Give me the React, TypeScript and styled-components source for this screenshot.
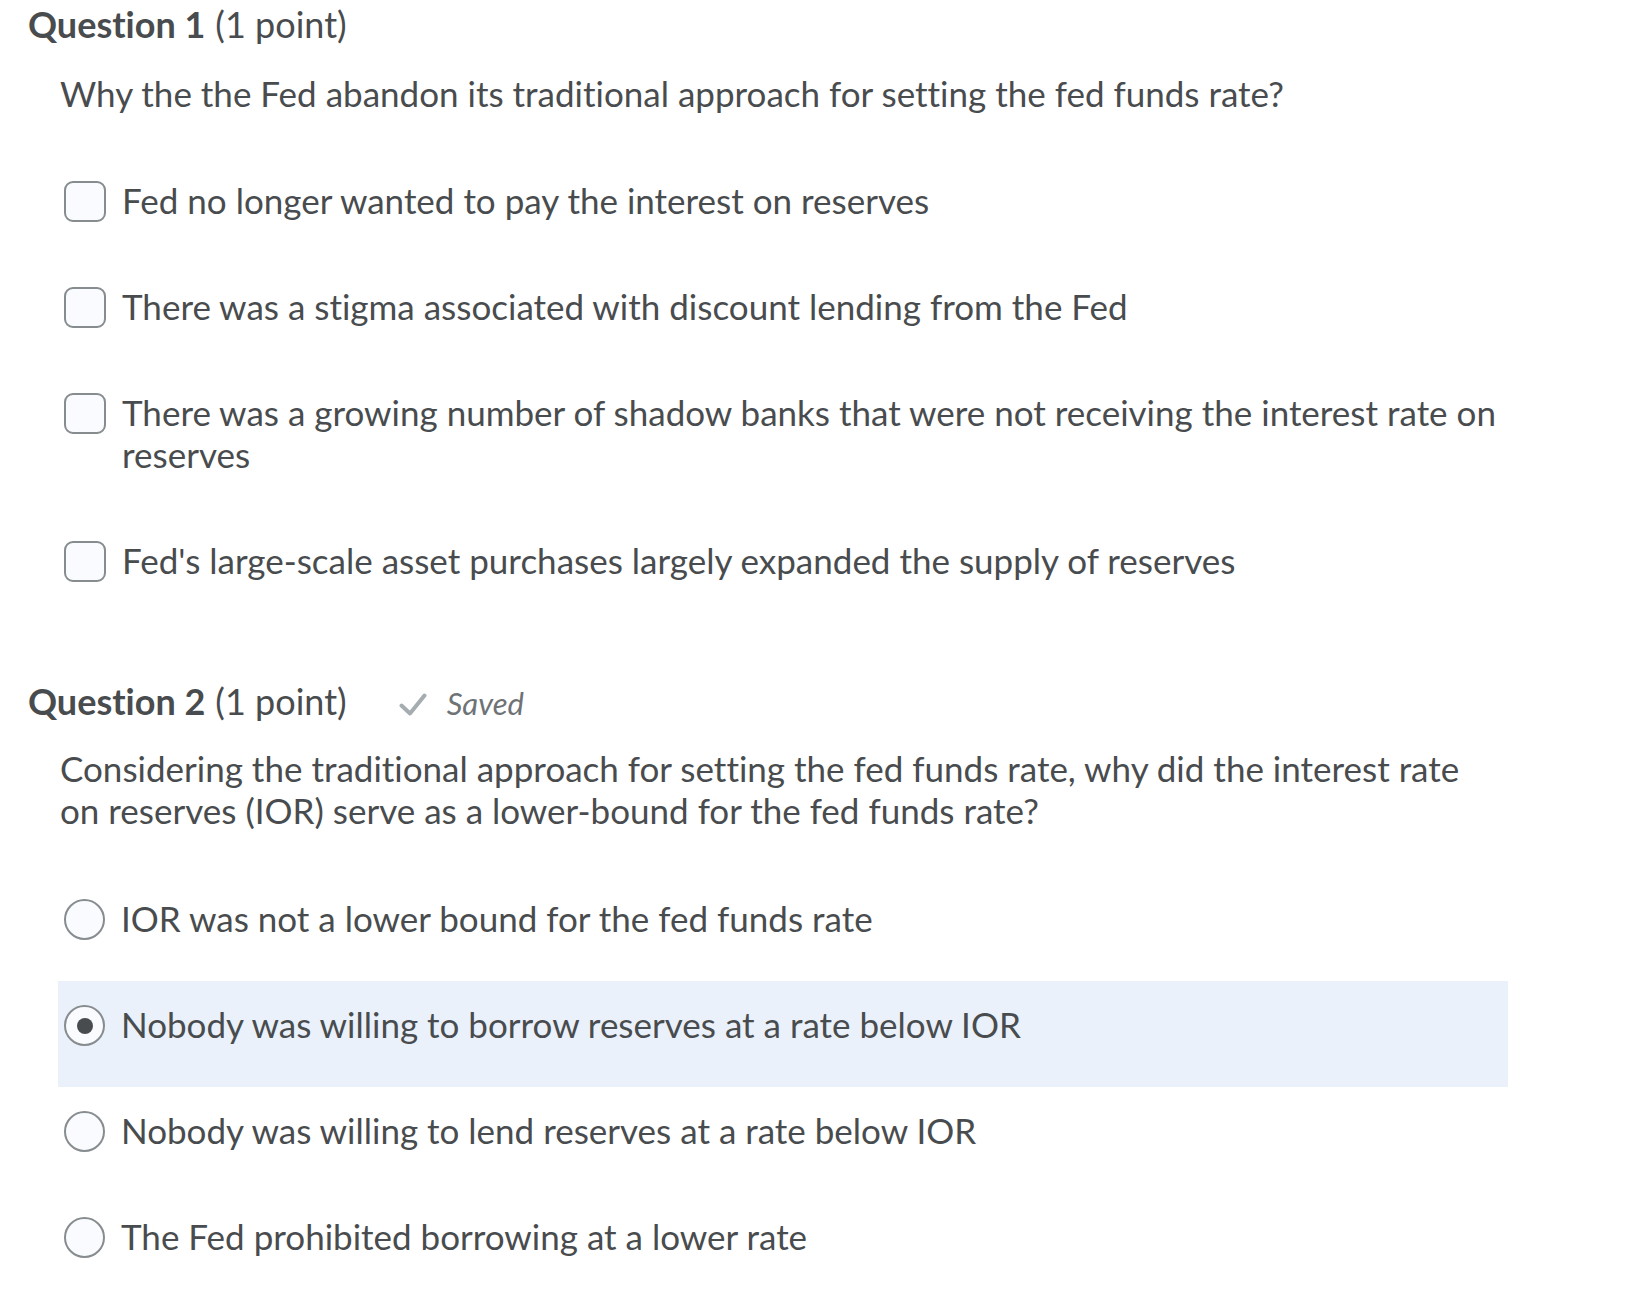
import React from "react";
import styled, { createGlobalStyle } from "styled-components";

const GlobalStyle = createGlobalStyle`
  html, body {
    margin: 0;
    padding: 0;
    background: #ffffff;
  }
  body {
    font-family: Lato, "Open Sans", "Liberation Sans", sans-serif;
    font-variant-ligatures: none;
    font-feature-settings: "liga" 0, "clig" 0;
    color: #494c4e;
  }
`;

const Page = styled.main`
  padding: 3px 0 24px 28px;
  width: 1500px;
`;

const Section = styled.section<{ $gapTop?: number }>`
  margin-top: ${(p) => p.$gapTop ?? 0}px;
`;

const Header = styled.h2`
  margin: 0;
  display: flex;
  align-items: baseline;
  font-size: 36px;
  line-height: 42px;
  font-weight: 400;
  color: #494c4e;
`;

const Strong = styled.strong`
  font-weight: 700;
  margin-right: 10px;
`;

const SavedBadge = styled.span`
  display: inline-flex;
  align-items: baseline;
  margin-left: 52px;
  gap: 20px;
  font-size: 31px;
  font-style: italic;
  color: #6e7376;
`;

const CheckIcon = styled.svg`
  width: 28px;
  height: 23px;
  align-self: center;
  transform: translateY(1px);
`;

const Prompt = styled.p<{ $top: number; $bottom: number }>`
  margin: ${(p) => p.$top}px 0 ${(p) => p.$bottom}px 32px;
  max-width: 1420px;
  font-size: 35px;
  line-height: 42px;
`;

const OptionList = styled.div`
  margin-left: 30px;
  width: 1450px;
  display: flex;
  flex-direction: column;
`;

const OptionRow = styled.label<{ $selected?: boolean }>`
  display: flex;
  align-items: flex-start;
  gap: 16px;
  padding: 22px 0 42px 6px;
  background: ${(p) => (p.$selected ? "#eaf1fb" : "transparent")};
  font-size: 35px;
  line-height: 42px;
  cursor: pointer;
`;

const OptionText = styled.span`
  flex: 1;
`;

const Box = styled.span`
  flex: none;
  box-sizing: border-box;
  width: 42px;
  height: 41px;
  margin: 2px 0 -1px;
  border: 2px solid #878c8f;
  border-radius: 9px;
  background: #f9fbff;
`;

const Radio = styled.span<{ $checked?: boolean }>`
  flex: none;
  box-sizing: border-box;
  width: 41px;
  height: 41px;
  margin: 2px 0 -1px;
  border: 2px solid #878c8f;
  border-radius: 50%;
  background: #f9fbff;
  display: flex;
  align-items: center;
  justify-content: center;
  &::after {
    content: "";
    display: ${(p) => (p.$checked ? "block" : "none")};
    width: 16px;
    height: 16px;
    border-radius: 50%;
    background: #494c4e;
  }
`;

const q1Options = [
  "Fed no longer wanted to pay the interest on reserves",
  "There was a stigma associated with discount lending from the Fed",
  "There was a growing number of shadow banks that were not receiving the interest rate on reserves",
  "Fed's large-scale asset purchases largely expanded the supply of reserves",
];

const q2Options = [
  "IOR was not a lower bound for the fed funds rate",
  "Nobody was willing to borrow reserves at a rate below IOR",
  "Nobody was willing to lend reserves at a rate below IOR",
  "The Fed prohibited borrowing at a lower rate",
];

export default function App() {
  const selected = 1;
  return (
    <>
      <GlobalStyle />
      <Page>
        <Section>
          <Header>
            <Strong>Question 1</Strong>(1 point)
          </Header>
          <Prompt $top={27} $bottom={43}>
            Why the the Fed abandon its traditional approach for setting the fed funds rate?
          </Prompt>
          <OptionList>
            {q1Options.map((o) => (
              <OptionRow key={o}>
                <Box />
                <OptionText>{o}</OptionText>
              </OptionRow>
            ))}
          </OptionList>
        </Section>
        <Section $gapTop={57}>
          <Header>
            <Strong>Question 2</Strong>(1 point)
            <SavedBadge>
              <CheckIcon viewBox="0 0 28 23" aria-hidden="true">
                <polyline
                  points="2.5,12.5 11,20.5 25.5,2.5"
                  fill="none"
                  stroke="#a6adb1"
                  strokeWidth="4"
                  strokeLinecap="round"
                  strokeLinejoin="round"
                />
              </CheckIcon>
              Saved
            </SavedBadge>
          </Header>
          <Prompt $top={23} $bottom={44}>
            Considering the traditional approach for setting the fed funds rate, why did the interest rate on
            reserves (IOR) serve as a lower-bound for the fed funds rate?
          </Prompt>
          <OptionList>
            {q2Options.map((o, i) => (
              <OptionRow key={o} $selected={i === selected}>
                <Radio $checked={i === selected} />
                <OptionText>{o}</OptionText>
              </OptionRow>
            ))}
          </OptionList>
        </Section>
      </Page>
    </>
  );
}
